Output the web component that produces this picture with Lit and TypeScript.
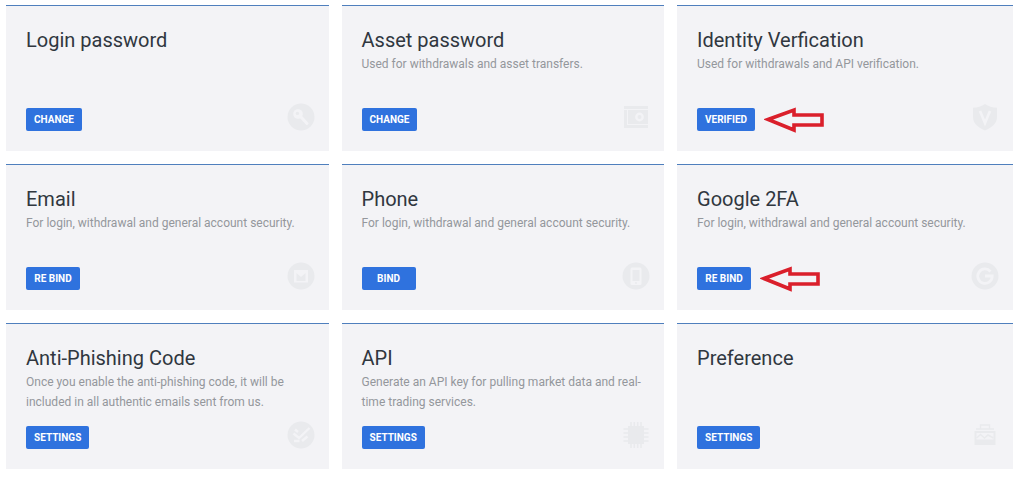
import { LitElement, html, css, svg, nothing } from "lit";
import type { SVGTemplateResult } from "lit";
import { customElement, property } from "lit/decorators.js";

interface Setting {
  title: string;
  text?: string;
  action: string;
  icon: string;
  marked?: boolean;
}

const SETTINGS: Setting[] = [
  { title: "Login password", action: "CHANGE", icon: "key" },
  { title: "Asset password", text: "Used for withdrawals and asset transfers.", action: "CHANGE", icon: "safe" },
  { title: "Identity Verfication", text: "Used for withdrawals and API verification.", action: "VERIFIED", icon: "shield", marked: true },
  { title: "Email", text: "For login, withdrawal and general account security.", action: "RE BIND", icon: "mail" },
  { title: "Phone", text: "For login, withdrawal and general account security.", action: "BIND", icon: "phone" },
  { title: "Google 2FA", text: "For login, withdrawal and general account security.", action: "RE BIND", icon: "google", marked: true },
  { title: "Anti-Phishing Code", text: "Once you enable the anti-phishing code, it will be included in all authentic emails sent from us.", action: "SETTINGS", icon: "phishing" },
  { title: "API", text: "Generate an API key for pulling market data and real-time trading services.", action: "SETTINGS", icon: "chip" },
  { title: "Preference", action: "SETTINGS", icon: "preference" },
];

const disc = svg`<circle class="fill" cx="14" cy="14" r="13.5" />`;

const ICONS: Record<string, SVGTemplateResult> = {
  key: svg`${disc}
    <circle class="cut" cx="11" cy="11" r="4.8" />
    <path class="cutline" stroke-width="3" stroke-linecap="round" d="M13.5 13.5L20 20.5" />
    <circle class="fill" cx="10.4" cy="10.4" r="1.7" />`,
  safe: svg`
    <path class="fill" d="M2 3H26V25H2z" />
    <path class="cutline" d="M2 6.5H26M5.5 7V21M5 21.5H26" />
    <path class="fill" d="M7 9H24V20H7z" />
    <circle class="cut" cx="17.5" cy="14" r="4.4" />
    <circle class="fill" cx="17.5" cy="14" r="2" />`,
  shield: svg`
    <path class="fill" d="M14 1C17.5 3.5 21.5 4.5 26 4.7V14C26 20.5 21 24.5 14 27.5C7 24.5 2 20.5 2 14V4.7C6.5 4.5 10.5 3.5 14 1z" />
    <path class="cutline" stroke-width="2.6" d="M9 8L14 20L19 8" />`,
  mail: svg`${disc}
    <path class="cut" d="M7 8H21V20.5H7z" />
    <path class="fill" d="M9.5 11L14 15L18.5 11V19H9.5z" />`,
  phone: svg`${disc}
    <rect class="cut" x="8.5" y="5.5" width="11" height="17.5" rx="1.5" />
    <path class="fill" d="M10.5 8H17.5V19H10.5z" />
    <circle class="fill" cx="14" cy="21" r="0.9" />`,
  google: svg`${disc}
    <path class="cutline" stroke-width="2.8" d="M19.5 9.5A7.2 7.2 0 1 0 21.2 14H14" />`,
  phishing: svg`${disc}
    <path class="cutline" stroke-width="2.4" d="M6.5 12.5L12 17L22.5 7M7 20H12.5M15 20L20.5 15.5M8 8.5L11 11" />`,
  chip: svg`
    <path class="fill" d="M6 5H22V23H6z" />
    <path class="line" stroke-width="1.6" d="M9 1V27M12.3 1V27M15.7 1V27M19 1V27M1.5 8H26.5M1.5 12H26.5M1.5 16H26.5M1.5 20H26.5" />`,
  preference: svg`
    <path class="line" stroke-width="1.4" d="M9.5 8V4H18.500V8M5 8H23" />
    <path class="fill" d="M3.5 10H24.500V24H3.500z" />
    <path class="cut" d="M5.500 12H22.500V18.500H5.500z" />
    <path class="line" stroke-width="1.600" d="M5.500 17L9.500 13.500L13.500 17L17 14L22.500 17" />`,
};

@customElement("setting-card")
export class SettingCard extends LitElement {
  @property({ attribute: false }) setting!: Setting;

  static styles = css`
    :host {
      display: flex;
      flex-direction: column;
      box-sizing: border-box;
      min-height: 146px;
      padding: 20px 14px 20px 20px;
      background: #f3f3f6;
      border-top: 1px solid #4f7fbd;
    }
    .title {
      margin: 0;
      font-size: 20px;
      font-weight: 400;
      line-height: 28px;
      color: #30373f;
    }
    .text {
      margin: 0;
      font-size: 12px;
      line-height: 20px;
      color: #94979c;
    }
    .row {
      display: flex;
      align-items: center;
      margin-top: auto;
      height: 23px;
    }
    .action {
      box-sizing: border-box;
      min-width: 54px;
      height: 23px;
      padding: 0 8px;
      border: 0;
      border-radius: 2px;
      background: #2f72de;
      color: #fff;
      font: 700 10px/23px Roboto, sans-serif;
      cursor: pointer;
    }
    .arrow {
      width: 60px;
      height: 26px;
      margin-left: 9px;
      fill: none;
      stroke: #da1f2b;
      stroke-width: 3.6;
    }
    .icon {
      width: 28px;
      height: 28px;
      margin: -6px 0 0 auto;
    }
    .fill { fill: #e9eaed; }
    .cut { fill: #f3f3f6; }
    .cutline { fill: none; stroke: #f3f3f6; }
    .line { fill: none; stroke: #e9eaed; }
  `;

  render() {
    const s = this.setting;
    return html`
      <h2 class="title">${s.title}</h2>
      ${s.text ? html`<p class="text">${s.text}</p>` : nothing}
      <div class="row">
        <button class="action" type="button">${s.action}</button>
        ${s.marked
          ? html`<svg class="arrow" viewBox="0 0 60 26" aria-hidden="true">
              <path d="M4 12.5L30 3V8H58V18H30V23z" />
            </svg>`
          : nothing}
        <svg class="icon" viewBox="0 0 28 28" aria-hidden="true">${ICONS[s.icon]}</svg>
      </div>
    `;
  }
}

@customElement("app-root")
export class AppRoot extends LitElement {
  static styles = css`
    :host {
      display: block;
      box-sizing: border-box;
      min-height: 100vh;
      padding: 5px 11px 10px 6px;
      background: #fff;
      font-family: Roboto, sans-serif;
    }
    .grid {
      display: grid;
      grid-template-columns: 24fr 24fr 25fr;
      gap: 13px;
    }
  `;

  render() {
    return html`<main class="grid">
      ${SETTINGS.map((s) => html`<setting-card .setting=${s}></setting-card>`)}
    </main>`;
  }
}
